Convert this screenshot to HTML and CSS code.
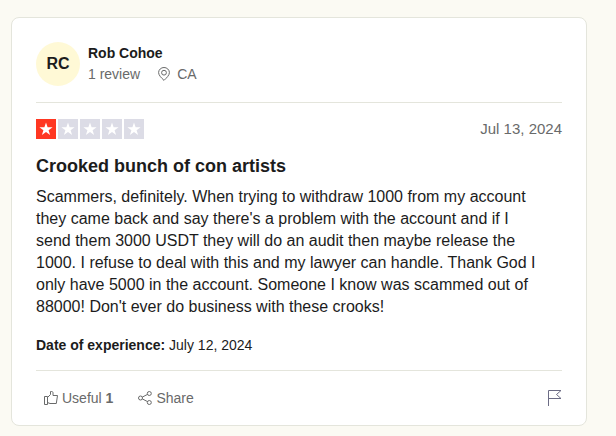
FILE: index.html
```
<!DOCTYPE html>
<html lang="en">

<head>
    <meta charset="utf-8">
    <title>Review by Rob Cohoe</title>
    <link rel="stylesheet" href="styles.css">
</head>

<body>
    <svg class="sprite" aria-hidden="true">
        <symbol id="star" viewBox="0 0 20 20">
            <path d="M10 3.4l1.6 4.8h5l-4 3 1.5 4.9-4.1-3-4.1 3 1.5-4.9-4-3h5z" fill="#fff"/>
        </symbol>
    </svg>

    <article class="review">
        <header class="consumer">
            <div class="avatar">RC</div>
            <div class="consumer-info">
                <a class="consumer-name" href="#">Rob Cohoe</a>
                <div class="consumer-details">
                    <span>1 review</span>
                    <span class="location">
                        <svg class="icon" viewBox="0 0 14 14">
                            <path d="M7 13.4C4.4 10.8 1.6 8.3 1.6 5.6a5.4 5.1 0 0 1 10.8 0C12.4 8.3 9.6 10.8 7 13.4z"/>
                            <circle cx="7" cy="5.7" r="2.4"/>
                        </svg>
                        CA
                    </span>
                </div>
            </div>
        </header>

        <section class="content">
            <div class="rating-row">
                <div class="stars" role="img" aria-label="Rated 1 out of 5 stars">
                    <svg class="star filled"><use href="#star"/></svg>
                    <svg class="star"><use href="#star"/></svg>
                    <svg class="star"><use href="#star"/></svg>
                    <svg class="star"><use href="#star"/></svg>
                    <svg class="star"><use href="#star"/></svg>
                </div>
                <time datetime="2024-07-13">Jul 13, 2024</time>
            </div>
            <h2>Crooked bunch of con artists</h2>
            <p class="text">
                Scammers, definitely. When trying to withdraw 1000 from my account<br>
                they came back and say there's a problem with the account and if I<br>
                send them 3000 USDT they will do an audit then maybe release the<br>
                1000. I refuse to deal with this and my lawyer can handle. Thank God I<br>
                only have 5000 in the account. Someone I know was scammed out of<br>
                88000! Don't ever do business with these crooks!
            </p>
            <p class="experience"><b>Date of experience:</b> July 12, 2024</p>
        </section>

        <footer class="actions">
            <button type="button" class="action">
                <svg class="icon" viewBox="0 0 14 14">
                    <path d="M.5 5.5h3v8h-3zM3.5 6.5l3-3v-3h1.200c1 0 1.300.7 1.300 1.500v2.500h4.500l-1.200 8H6l-2.500-1"/>
                </svg>
                <span>Useful <b>1</b></span>
            </button>
            <button type="button" class="action">
                <svg class="icon" viewBox="0 0 14 14">
                    <circle cx="2.5" cy="7" r="2"/>
                    <circle cx="11.3" cy="2.5" r="2"/>
                    <circle cx="11.3" cy="11.5" r="2"/>
                    <path d="M4.300 6.100l5.200-2.700M4.300 7.900l5.200 2.700"/>
                </svg>
                <span>Share</span>
            </button>
            <button type="button" class="flag" aria-label="Report review">
                <svg viewBox="0 0 14 16">
                    <path d="M.5 16V.5H13l-4.500 4L13 8.500H.5"/>
                </svg>
            </button>
        </footer>
    </article>
</body>

</html>
```

FILE: styles.css
```
body {
    margin: 0;
    padding: 17px 29px 10px 11px;
    background-color: #fbfaf3;
    color: #1c1c1c;
    font-family: "Liberation Sans", Arial, sans-serif;
    font-size: 14px;
    line-height: 22px;
}

.sprite {
    display: none;
}

.review {
    padding: 24px 24px 16px;
    border: 1px solid #e4e5dc;
    border-radius: 8px;
    background-color: #fff;
}

.consumer {
    display: flex;
    align-items: center;
    gap: 8px;
    padding-bottom: 16px;
    border-bottom: 1px solid #e4e5dc;
}

.avatar {
    width: 44px;
    height: 44px;
    border-radius: 50%;
    background-color: #fff9d6;
    font-size: 16px;
    font-weight: bold;
    line-height: 44px;
    text-align: center;
}

.consumer-name {
    display: block;
    color: #1c1c1c;
    font-weight: bold;
    line-height: 20px;
    text-decoration: none;
}

.consumer-details {
    display: flex;
    gap: 17px;
    color: #696a6a;
}

.location {
    display: flex;
    align-items: center;
    gap: 6px;
}

.icon {
    width: 14px;
    height: 14px;
    fill: none;
    stroke: #696a6a;
    stroke-width: 1;
}

.rating-row {
    display: flex;
    align-items: center;
    justify-content: space-between;
    padding-top: 16px;
    color: #696a6a;
    font-size: 15px;
    line-height: 20px;
}

.stars {
    display: flex;
    gap: 2px;
}

.star {
    width: 20px;
    height: 20px;
    background-color: #dcdce6;
}

.star.filled {
    background-color: #ff3722;
}

h2 {
    margin: 16px 0 9px;
    font-size: 18px;
    line-height: 22px;
}

.text {
    margin: 0;
    font-size: 16px;
    line-height: 22px;
}

.experience {
    margin: 16px 0 14px;
}

.actions {
    display: flex;
    align-items: center;
    gap: 9px;
    padding-top: 16px;
    border-top: 1px solid #e4e5dc;
}

.action,
.flag {
    display: flex;
    align-items: center;
    gap: 4px;
    padding: 0 8px;
    border: none;
    background: none;
    color: #696a6a;
    font: inherit;
    cursor: pointer;
}

.flag {
    margin-left: auto;
    padding: 0;
}

.flag svg {
    width: 14px;
    height: 16px;
    fill: none;
    stroke: #6c6c85;
}
```
